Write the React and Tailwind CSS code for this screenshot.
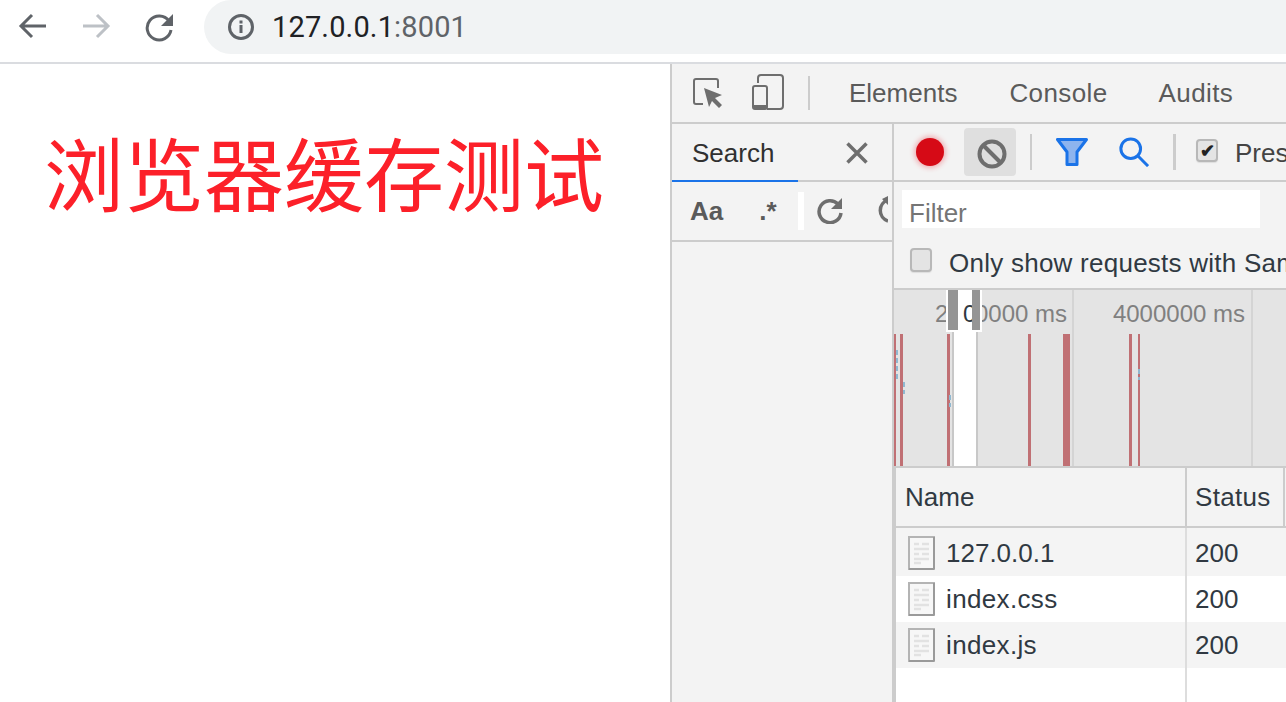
const sans = 'font-["Liberation_Sans",sans-serif]';

function FileIcon() {
  return (
    <svg width="27" height="34" viewBox="0 0 27 34" className="shrink-0">
      <rect x="1" y="1" width="25" height="32" fill="#f7f7f7" stroke="#b4b4b4" strokeWidth="2" />
      <path d="M1 33h25M26 1v32" stroke="#9a9a9a" strokeWidth="2" />
      <path d="M6 8h5M14 8h7M6 13h15M6 18h5M14 18h7M6 23h15M6 27h7" stroke="#e2e2e2" strokeWidth="2.500" />
    </svg>
  );
}

function Row({ name, striped, first }) {
  return (
    <div className={`flex items-center ${first ? "h-[48px]" : "h-[46px]"} ${striped ? "bg-[#f4f4f4]" : "bg-white"}`}>
      <div className={`flex w-[289px] items-center gap-[11px] pl-[12px] ${first ? "pt-[2px]" : ""}`}>
        <FileIcon />
        <span className={`text-[#303942] ${first ? "" : "tracking-[0.35px]"}`}>{name}</span>
      </div>
      <div className="h-full w-[2px] bg-[#dddddd]" />
      <span className={`pl-[8px] text-[#303942] ${first ? "pt-[2px]" : ""}`}>200</span>
    </div>
  );
}

function Overview() {
  const bars = [
    [0, 2], [6, 3], [53, 3], [134, 3], [169, 7], [235, 3], [244, 2],
  ];
  return (
    <svg width="392" height="132" viewBox="0 0 392 132" className="absolute left-0 top-[44px]">
      {bars.map(([x, w]) => (
        <rect key={x} x={x} y="0" width={w} height="132" fill="#c07074" />
      ))}
      <path d="M3 16v30M10 48v12M56 61v12M245 35v11" stroke="#8fb8d0" strokeWidth="2" strokeDasharray="5 3" />
    </svg>
  );
}

export default function App() {
  return (
    <div className={`h-[702px] w-[1286px] overflow-hidden bg-white ${sans}`}>
      {/* browser bar */}
      <div className="flex h-[64px] items-start border-b-2 border-[#dadce0] bg-white">
        <div className="flex h-[54px] w-[204px] shrink-0 items-center pl-[18px]">
          <svg width="30" height="30" viewBox="0 0 30 30" fill="none" stroke="#5f6368" strokeWidth="3">
            <path d="M28 14H4M14 3L3 14l11 11" />
          </svg>
          <svg width="30" height="30" viewBox="0 0 30 30" fill="none" stroke="#bdc1c6" strokeWidth="3" className="ml-[33px]">
            <path d="M2 14h24M16 3l11 11-11 11" />
          </svg>
          <svg width="30" height="30" viewBox="0 0 30 30" className="ml-[34px]">
            <path d="M24 9a12 12 0 1 0 2 9" fill="none" stroke="#5f6368" strokeWidth="3" />
            <path d="M28 2v12H16z" fill="#5f6368" />
          </svg>
        </div>
        <div className="flex h-[54px] flex-1 items-center rounded-l-[27px] bg-[#f1f3f4] pl-[23px]">
          <svg width="28" height="28" viewBox="0 0 28 28" fill="none">
            <circle cx="14" cy="14" r="11.5" stroke="#5f6368" strokeWidth="3" />
            <path d="M14 12v8M14 7.500v3" stroke="#5f6368" strokeWidth="3" />
          </svg>
          <span className="ml-[17px] pt-[1px] font-['Roboto',sans-serif] text-[29px] tracking-[0.15px] text-[#202124]">
            127.0.0.1<span className="text-[#5f6368]">:8001</span>
          </span>
        </div>
      </div>

      <div className="flex h-[638px]">
        {/* page */}
        <div className="w-[670px] shrink-0 pl-[44px] pt-[60px]">
          <h1 className="font-['Noto_Sans_CJK_SC',sans-serif] text-[80px] font-normal leading-[92px] text-[#fc2029]">
            浏览器缓存测试
          </h1>
        </div>

        {/* devtools */}
        <div className="flex min-w-0 flex-1 flex-col border-l-2 border-[#cccccc] bg-[#f3f3f3] text-[26px]">
          <div className="flex h-[60px] shrink-0 items-center border-b-2 border-[#cccccc] pl-[21px] text-[#5a5a5a]">
            <svg width="30" height="30" viewBox="0 0 30 30" fill="none">
              <path d="M10 26H3a2 2 0 0 1-2-2V3a2 2 0 0 1 2-2h20a2 2 0 0 1 2 2v7" stroke="#6e6e6e" strokeWidth="2" />
              <path d="M11 10l18 7-7 3 7 7-3 3-7-7-3 6z" fill="#6e6e6e" />
            </svg>
            <svg width="32" height="36" viewBox="0 0 32 36" fill="none" className="ml-[29px] -mt-[2px]">
              <path d="M6 9V4a3 3 0 0 1 3-3h19a3 3 0 0 1 3 3v28a3 3 0 0 1-3 3H15" stroke="#6e6e6e" strokeWidth="2" />
              <rect x="1" y="12" width="14" height="23" rx="2" stroke="#6e6e6e" strokeWidth="2" />
              <rect x="1" y="31" width="14" height="4" fill="#6e6e6e" />
            </svg>
            <div className="ml-[24px] h-[34px] w-[2px] bg-[#cccccc]" />
            <span className="ml-[39px]">Elements</span>
            <span className="ml-[52px] tracking-[0.4px]">Console</span>
            <span className="ml-[51px] tracking-[0.4px]">Audits</span>
          </div>

          <div className="flex min-h-0 flex-1">
            {/* search pane */}
            <div className="flex w-[222px] shrink-0 flex-col border-r-2 border-[#cccccc]">
              <div className="flex h-[58px] shrink-0 border-b-2 border-[#cccccc]">
                <div className="-mb-[2px] flex h-[58px] w-[126px] items-center border-b-2 border-[#1a73e8] pl-[20px] pt-[2px] text-[#303030]">
                  Search
                </div>
                <svg width="22" height="22" viewBox="0 0 22 22" stroke="#6e6e6e" strokeWidth="3.500" className="ml-[48px] mt-[18px]">
                  <path d="M1.500 1.500l19 19M20.500 1.500l-19 19" />
                </svg>
              </div>
              <div className="flex h-[60px] shrink-0 items-center overflow-hidden border-b-2 border-[#cccccc] pl-[18px] text-[#5a5a5a]">
                <span className="font-bold">Aa</span>
                <span className="ml-[36px] font-bold">.*</span>
                <div className="ml-[21px] h-[38px] w-[6px] shrink-0 bg-white" />
                <svg width="28" height="28" viewBox="0 0 28 28" className="ml-[12px] -mt-[2px] shrink-0">
                  <path d="M22 8a11 11 0 1 0 3 9" fill="none" stroke="#6e6e6e" strokeWidth="3.500" />
                  <path d="M26 2v11H15z" fill="#6e6e6e" />
                </svg>
                <svg width="11" height="28" viewBox="0 0 11 28" className="ml-[33px] -mt-[2px] shrink-0">
                  <path d="M11 4a11 11 0 0 0 0 21" fill="none" stroke="#6e6e6e" strokeWidth="3.500" />
                  <path d="M5 3l6-3v9z" fill="#6e6e6e" />
                </svg>
              </div>
            </div>

            {/* network pane */}
            <div className="flex min-w-0 flex-1 flex-col overflow-hidden">
              <div className="flex h-[58px] shrink-0 items-center border-b-2 border-[#cccccc] pl-[22px]">
                <div className="h-[28px] w-[28px] shrink-0 rounded-full bg-[#d60a16] shadow-[0_0_5px_2px_#efb0b4]" />
                <div className="ml-[20px] flex h-[48px] w-[52px] shrink-0 items-center justify-center rounded-[4px] bg-[#dfdfdf] pl-[4px] pt-[4px]">
                  <svg width="30" height="30" viewBox="0 0 30 30" fill="none" stroke="#6e6e6e" strokeWidth="4">
                    <circle cx="15" cy="15" r="12.500" />
                    <path d="M6.500 6.500l17 17" />
                  </svg>
                </div>
                <div className="ml-[14px] h-[36px] w-[2px] shrink-0 bg-[#cccccc]" />
                <svg width="32" height="28" viewBox="0 0 32 28" className="ml-[24px] shrink-0">
                  <path d="M1.500 1.500h29L21 14v12.500H11V14z" fill="#8db4ee" stroke="#1a73e8" strokeWidth="3" strokeLinejoin="round" />
                </svg>
                <svg width="30" height="30" viewBox="0 0 32 32" fill="none" stroke="#1a73e8" strokeWidth="3.200" className="ml-[31px] shrink-0">
                  <circle cx="12.500" cy="12.500" r="10.500" />
                  <path d="M20 20l11 11" />
                </svg>
                <div className="ml-[24px] h-[36px] w-[3px] shrink-0 bg-[#cccccc]" />
                <div className="-mt-[3px] ml-[20px] flex h-[23px] w-[22px] shrink-0 items-center justify-center rounded-[4px] border-2 border-[#b8b8b8] bg-[#e4e4e4] text-[18px] font-bold leading-none text-[#222222] shadow-[0_1px_1px_#dddddd]">
                  ✔
                </div>
                <span className="ml-[17px] whitespace-nowrap pt-[2px] text-[#444444]">Preserve log</span>
              </div>

              <div className="flex h-[54px] shrink-0 items-center pl-[8px]">
                <div className="flex h-[38px] w-[358px] shrink-0 items-center bg-white pl-[7px] pt-[8px] text-[#757575]">
                  Filter
                </div>
              </div>

              <div className="flex h-[52px] shrink-0 items-center pl-[16px]">
                <div className="-mt-[4px] h-[24px] w-[22px] shrink-0 rounded-[4px] border-2 border-[#b8b8b8] bg-[#e4e4e4] shadow-[0_1px_1px_#dddddd]" />
                <span className="ml-[17px] whitespace-nowrap pt-[2px] tracking-[0.25px] text-[#303942]">Only show requests with Same-site</span>
              </div>

              {/* overview */}
              <div className="relative h-[180px] shrink-0 border-y-2 border-[#cccccc] bg-[#e4e4e4]">
                <div className="absolute left-[178px] top-0 h-full w-[2px] bg-[#d4d4d4]" />
                <div className="absolute left-[357px] top-0 h-full w-[2px] bg-[#d4d4d4]" />
                <span className="absolute right-[219px] top-[6px] whitespace-nowrap text-[24px] text-[#808080]">2000000 ms</span>
                <span className="absolute right-[41px] top-[6px] whitespace-nowrap text-[24px] text-[#808080]">4000000 ms</span>
                <Overview />
                <div className="absolute left-[58px] top-0 h-full w-[26px] border-x-2 border-[#c8c8c8] bg-white" />
                <div className="absolute left-[52px] top-0 h-[42px] w-[36px] overflow-hidden bg-white">
                  <span className="absolute left-[17px] top-[6px] text-[24px] text-[#303942]">0</span>
                  <div className="absolute left-[2px] top-0 h-[40px] w-[10px] bg-[#959595]" />
                  <div className="absolute left-[26px] top-0 h-[40px] w-[8px] bg-[#959595]" />
                </div>
              </div>

              {/* table */}
              <div className="flex min-h-0 flex-1 flex-col border-l-2 border-[#cccccc] bg-white">
                <div className="flex h-[60px] shrink-0 items-center border-b-2 border-[#cccccc] bg-[#f3f3f3] text-[#303942]">
                  <div className="flex h-full w-[289px] items-center pl-[9px]">Name</div>
                  <div className="h-full w-[2px] bg-[#cccccc]" />
                  <div className="flex h-full w-[98px] items-center border-r-2 border-[#cccccc] pl-[8px] tracking-[0.3px]">Status</div>
                </div>
                <Row name="127.0.0.1" striped first />
                <Row name="index.css" />
                <Row name="index.js" striped />
                <div className="ml-[289px] w-[2px] flex-1 bg-[#dddddd]" />
              </div>
            </div>
          </div>
        </div>
      </div>
    </div>
  );
}
